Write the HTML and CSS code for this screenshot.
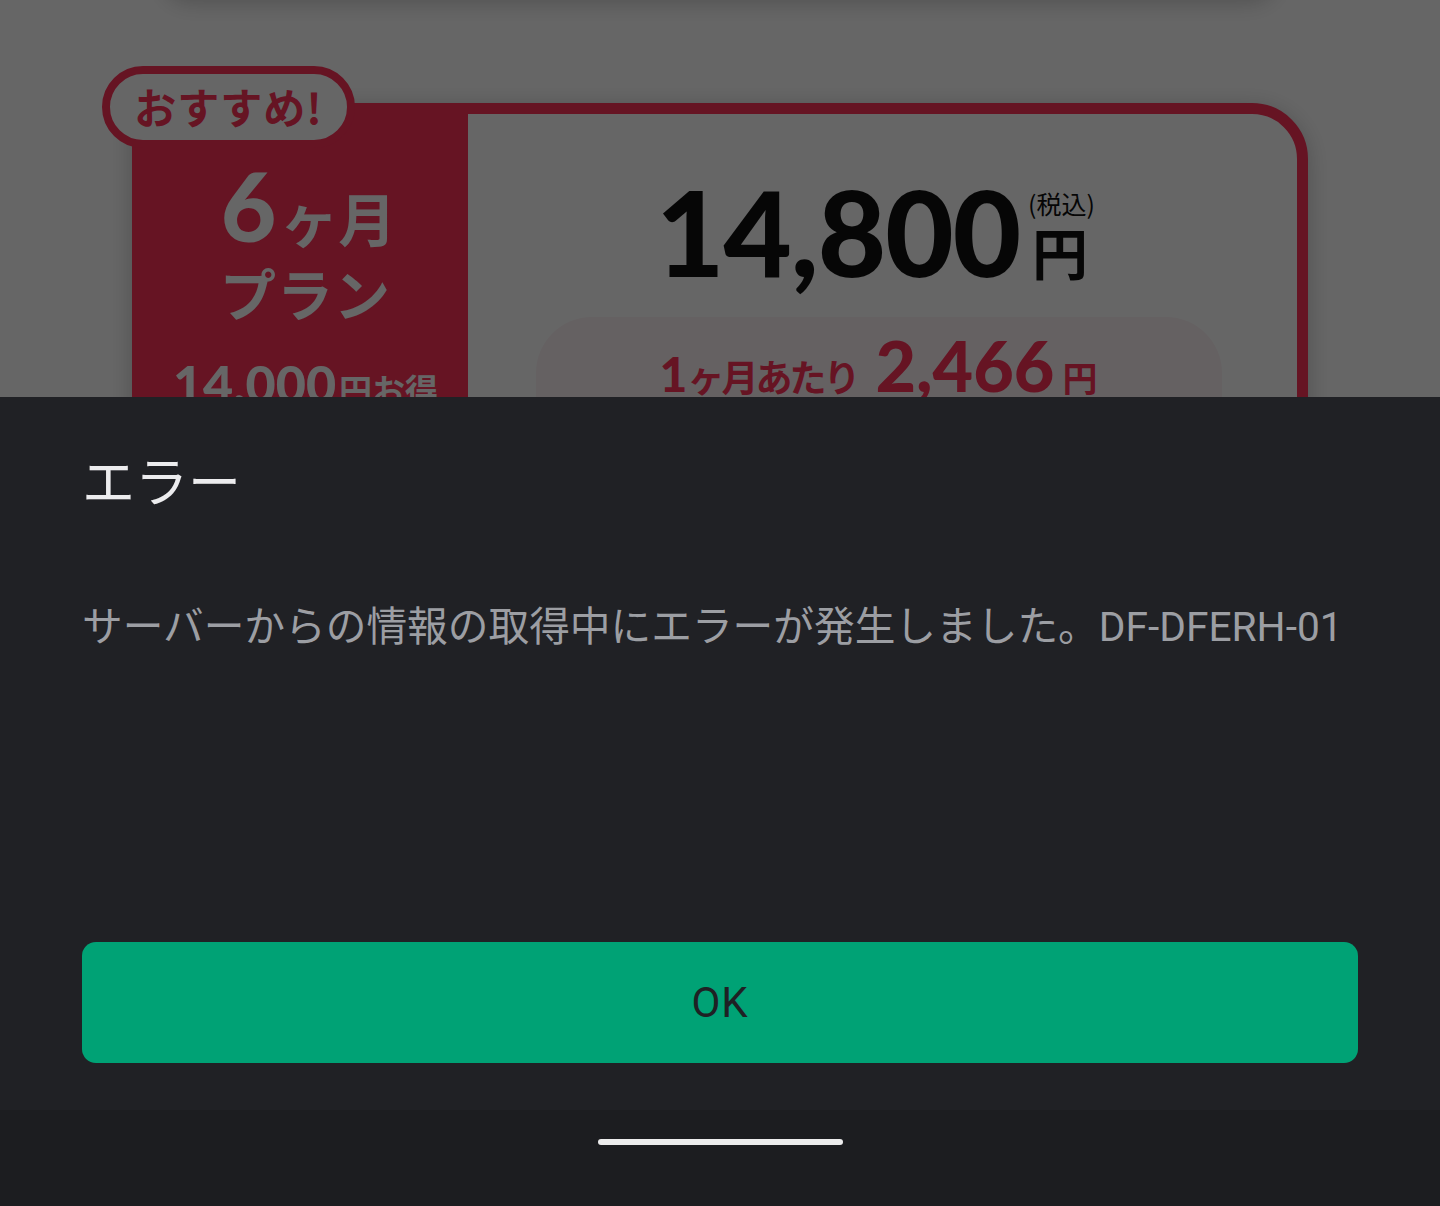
FILE: index.html
```html
<!DOCTYPE html>
<html lang="ja">
<head>
<meta charset="utf-8">
<title>エラー</title>
<link rel="stylesheet" href="styles.css">
</head>
<body>
<div class="screen">
  <section class="top">
    <div class="prev-card"></div>
    <div class="plan-card">
      <div class="plan-left">
        <div class="pl-line1"><span class="num">6</span><span class="jp">ヶ月</span></div>
        <div class="pl-line2">プラン</div>
        <div class="pl-line3"><span class="num">14,000</span><span class="jp">円お得</span></div>
      </div>
      <div class="plan-right">
        <div class="price"><span class="num">14,800</span><span class="unit"><span class="tax">(税込)</span><span class="yen">円</span></span></div>
        <div class="monthly"><span class="num sm">1</span><span class="jp">ヶ月あたり</span><span class="num big">2,466</span><span class="jp yen2">円</span></div>
      </div>
    </div>
    <div class="badge">おすすめ!</div>
    <div class="dim"></div>
  </section>
  <section class="sheet">
    <h1 class="title">エラー</h1>
    <p class="message">サーバーからの情報の取得中にエラーが発生しました。DF-DFERH-01</p>
    <button class="ok">OK</button>
  </section>
  <nav class="navbar"><div class="home"></div></nav>
</div>
</body>
</html>
```

FILE: styles.css
```css
* { box-sizing: border-box; }
html, body { margin: 0; padding: 0; }
body {
  width: 1440px;
  height: 1206px;
  overflow: hidden;
  background: #1c1d20;
  font-family: Roboto, "Noto Sans CJK JP", sans-serif;
}
.screen { display: flex; flex-direction: column; width: 1440px; height: 1206px; }

/* ---------- dimmed page behind ---------- */
.top {
  position: relative;
  height: 397px;
  flex: none;
  overflow: hidden;
  background: #ffffff;
}
.prev-card {
  height: 60px;
  margin: -62px 165px 0 165px;
  background: #ffffff;
  border-radius: 0 0 24px 24px;
  box-shadow: 0 4px 22px rgba(0,0,0,0.22);
}
.plan-card {
  display: flex;
  margin: 105px 0 0 132px;
  width: 1176px;
  height: 420px;
  border: 11px solid #ff3259;
  border-radius: 16px 56px 56px 16px;
  background: #ffffff;
  box-shadow: 0 4px 22px rgba(0,0,0,0.22);
}
.plan-left {
  width: 336px;
  margin: -11px 0 0 -11px;
  padding-top: 54px;
  padding-left: 11px;
  background: #ff3259;
  color: #ffffff;
  display: flex;
  flex-direction: column;
  align-items: center;
  flex: none;
  border-radius: 16px 0 0 0;
}
.num { font-family: Lato, "Noto Sans", sans-serif; font-weight: 900; }
.jp { font-family: "Noto Sans CJK JP", sans-serif; font-weight: 700; }
.pl-line1 {
  display: flex;
  align-items: baseline;
  height: 96px;
  margin-left: 6px;
  white-space: nowrap;
}
.pl-line1 .num { font-size: 96px; line-height: 96px; }
.pl-line1 .jp { font-size: 58px; line-height: 58px; margin-left: 4px; }
.pl-line2 {
  display: flex;
  font-family: "Noto Sans CJK JP", sans-serif;
  font-weight: 700;
  font-size: 56px;
  line-height: 64px;
  height: 64px;
  margin-top: 7px;
  letter-spacing: 1px;
}
.pl-line3 {
  display: flex;
  align-items: baseline;
  height: 60px;
  margin-top: 29px;
  white-space: nowrap;
}
.pl-line3 .num { font-size: 52px; line-height: 60px; }
.pl-line3 .jp { font-size: 33px; line-height: 33px; margin-left: 3px; }

.plan-right {
  flex: 1;
  display: flex;
  flex-direction: column;
  align-items: center;
  padding-top: 58px;
}
.price {
  display: flex;
  align-items: flex-end;
  color: #111111;
  height: 120px;
  margin-left: -14px;
}
.price .num {
  font-size: 118px;
  line-height: 120px;
  letter-spacing: -1px;
}
.unit {
  display: flex;
  flex-direction: column;
  align-items: flex-start;
  margin-left: 12px;
  margin-bottom: 13px;
  font-family: "Noto Sans CJK JP", sans-serif;
  font-weight: 700;
}
.tax {
  font-size: 25px;
  line-height: 28px;
  height: 28px;
  font-weight: 400;
  margin-left: -4px;
  margin-bottom: 6px;
  white-space: nowrap;
}
.yen { font-size: 56px; line-height: 56px; height: 56px; }

.monthly {
  margin-top: 25px;
  width: 686px;
  height: 140px;
  margin-right: 8px;
  border-radius: 56px;
  background: #fcf2f5;
  color: #ff3259;
  display: flex;
  justify-content: center;
  align-items: baseline;
  padding-top: 8px;
  line-height: 80px;
  white-space: nowrap;
}
.monthly .sm { font-size: 48px; }
.monthly .jp { font-size: 37px; letter-spacing: -3px; }
.monthly .big { font-size: 70px; margin-left: 18px; letter-spacing: 0; }
.monthly .yen2 { font-size: 35px; margin-left: 8px; letter-spacing: 0; }

.badge {
  position: absolute;
  left: 102px;
  top: 66px;
  width: 253px;
  height: 82px;
  border: 8px solid #ff3259;
  border-radius: 41px;
  background: #ffffff;
  color: #ff3259;
  font-family: "Noto Sans CJK JP", sans-serif;
  font-weight: 700;
  font-size: 42px;
  line-height: 64px;
  text-align: center;
  letter-spacing: 1px;
}
.dim {
  position: absolute;
  inset: 0;
  background: rgba(0,0,0,0.6);
}

/* ---------- bottom sheet ---------- */
.sheet {
  height: 713px;
  flex: none;
  background: #202125;
  padding: 55px 82px 47px 82px;
  display: flex;
  flex-direction: column;
}
.title {
  margin: 0;
  font-family: Roboto, "Noto Sans CJK JP", sans-serif;
  font-weight: 400;
  font-size: 53px;
  line-height: 64px;
  color: #ececee;
}
.message {
  margin: 87px 0 0 0;
  font-family: Roboto, "Noto Sans CJK JP", sans-serif;
  font-size: 40.7px;
  line-height: 48px;
  color: #9c9ea3;
  white-space: nowrap;
}
.ok {
  margin-top: auto;
  height: 121px;
  width: 100%;
  border: none;
  border-radius: 14px;
  background: #00a275;
  color: #1f2124;
  font-family: Roboto, sans-serif;
  font-weight: 400;
  font-size: 42px;
  letter-spacing: 1px;
  padding: 0;
}

/* ---------- nav bar ---------- */
.navbar {
  height: 96px;
  flex: none;
  background: #1c1d20;
  display: flex;
  justify-content: center;
}
.home {
  width: 245px;
  height: 6px;
  margin-top: 29px;
  border-radius: 3px;
  background: #ececec;
}
```
